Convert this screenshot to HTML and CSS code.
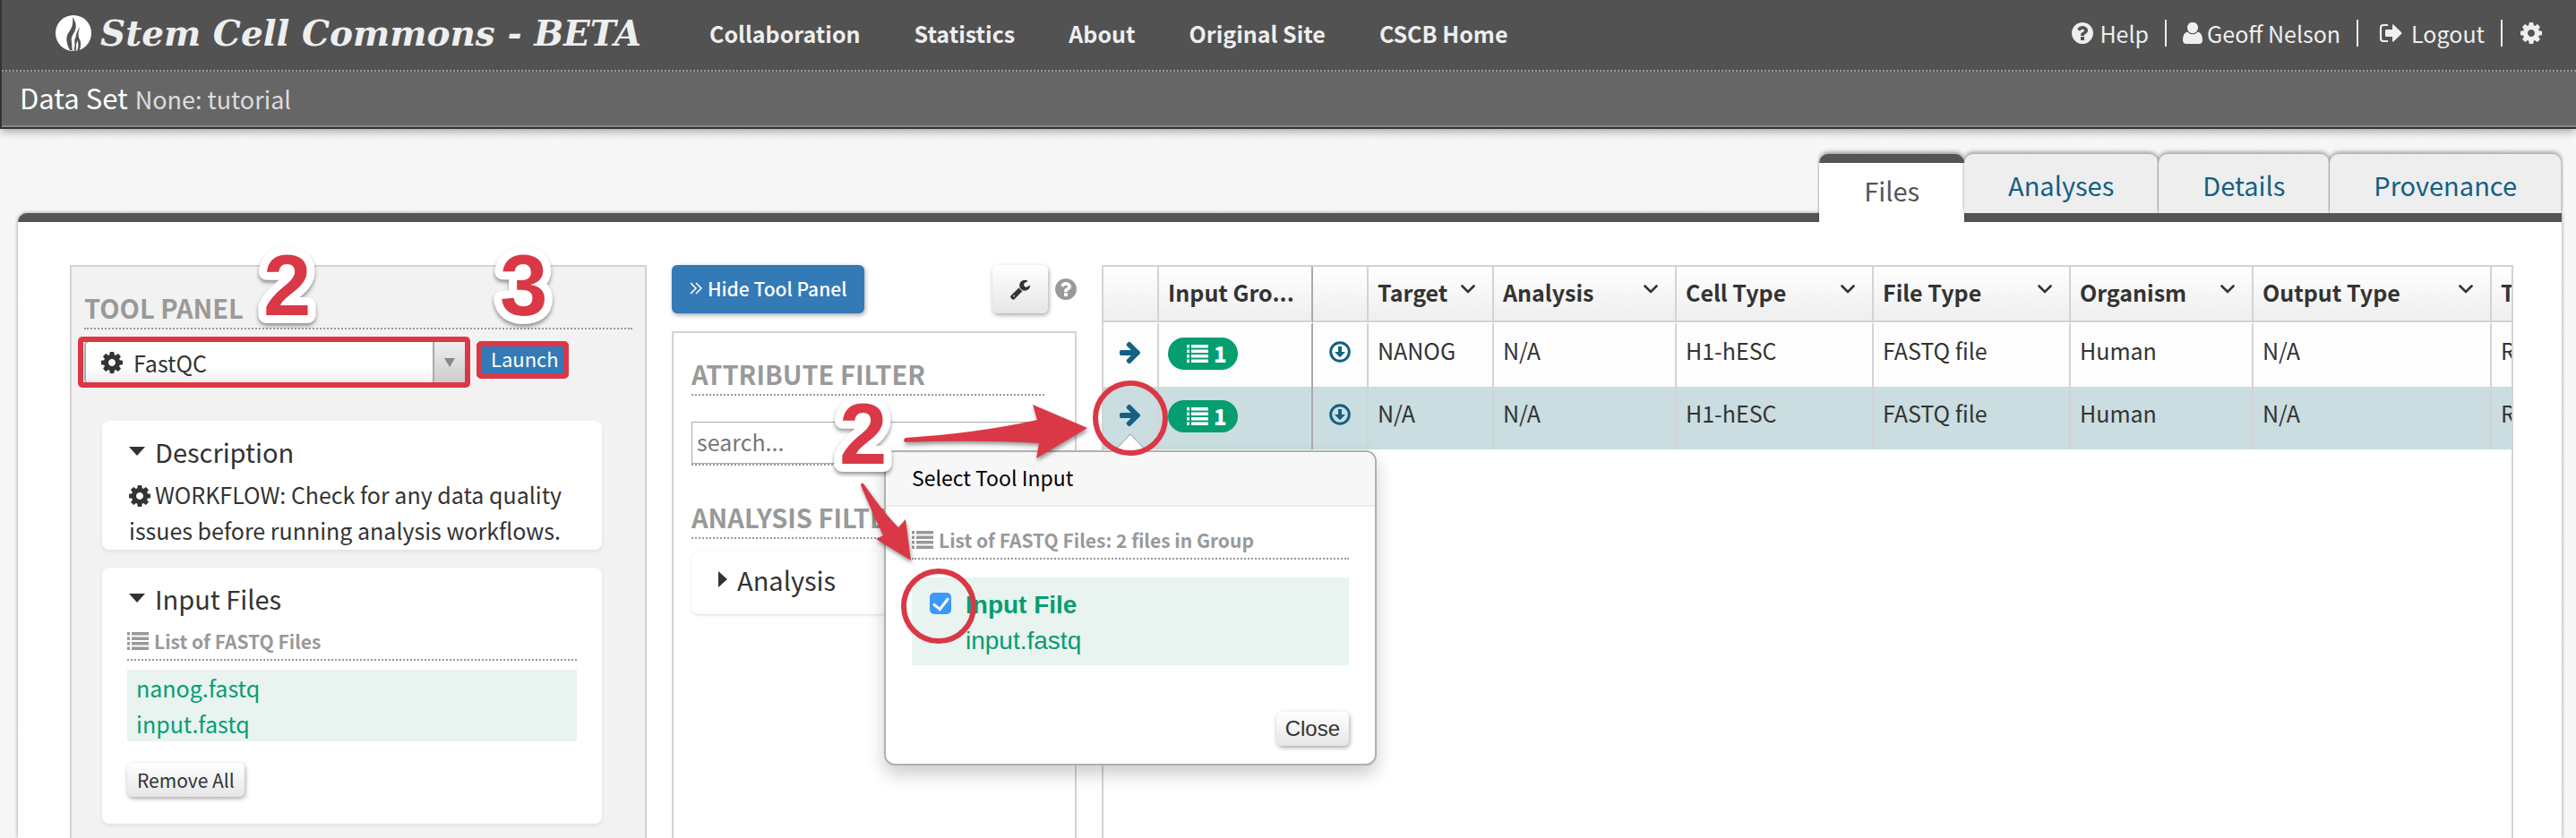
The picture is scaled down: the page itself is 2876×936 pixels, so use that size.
FILE: index.html
```html
<!DOCTYPE html>
<html lang="en">
<head>
<meta charset="utf-8">
<title>Stem Cell Commons - BETA</title>
<link rel="stylesheet" href="styles.css">
</head>
<body>
<svg class="defs" aria-hidden="true">
  <symbol id="i-help" viewBox="0 0 1792 1792"><path d="M1024 1376v-192q0-14-9-23t-23-9h-192q-14 0-23 9t-9 23v192q0 14 9 23t23 9h192q14 0 23-9t9-23zm256-672q0-88-55.500-163t-138.500-116-170-41q-243 0-371 213-15 24 8 42l132 100q7 6 19 6 16 0 25-12 53-68 86-92 34-24 86-24 48 0 85.500 26t37.500 59q0 38-20 61t-68 45q-63 28-115.500 86.500t-52.500 125.500v36q0 14 9 23t23 9h192q14 0 23-9t9-23q0-19 21.500-49.500t54.500-49.500q32-18 49-28.500t46-35 44.500-48 28-60.500 12.500-81zm384 192q0 209-103 385.500t-279.500 279.500-385.500 103-385.500-103-279.500-279.500-103-385.500 103-385.500 279.500-279.500 385.500-103 385.500 103 279.500 279.500 103 385.500z"/></symbol>
  <symbol id="i-cog" viewBox="0 0 1792 1792"><path d="M1152 896q0-106-75-181t-181-75-181 75-75 181 75 181 181 75 181-75 75-181zm512-109v222q0 12-8 23t-20 13l-185 28q-19 54-39 91 35 50 107 138 10 12 10 25t-9 23q-27 37-99 108t-94 71q-12 0-26-9l-138-108q-44 23-91 38-16 136-29 186-7 28-36 28h-222q-14 0-24.500-8.500t-11.500-21.500l-28-184q-49-16-90-37l-141 107q-10 9-25 9-14 0-25-11-126-114-165-168-7-10-7-23 0-12 8-23 15-21 51-66.500t54-70.500q-27-50-41-99l-183-27q-13-2-21-12.500t-8-23.500v-222q0-12 8-23t19-13l186-28q14-46 39-92-40-57-107-138-10-12-10-24 0-10 9-23 26-36 98.500-107.500t94.500-71.500q13 0 26 10l138 107q44-23 91-38 16-136 29-186 7-28 36-28h222q14 0 24.500 8.500t11.500 21.500l28 184q49 16 90 37l142-107q9-9 24-9 13 0 25 10 129 119 165 170 7 8 7 22 0 12-8 23-15 21-51 66.500t-54 70.500q26 50 41 98l183 28q13 2 21 12.500t8 23.500z"/></symbol>
  <symbol id="i-wrench" viewBox="0 0 1792 1792"><path d="M448 1472q0-26-19-45t-45-19-45 19-19 45 19 45 45 19 45-19 19-45zm644-420l-682 682q-37 37-90 37-52 0-91-37l-106-108q-38-36-38-90 0-53 38-91l681-681q39 98 114.500 173.500t173.500 114.500zm634-435q0 39-23 106-47 134-164.500 217.500t-258.500 83.500q-185 0-316.500-131.500t-131.500-316.500 131.500-316.500 316.500-131.500q58 0 121.500 16.500t107.500 46.500q16 11 16 28t-16 28l-293 169v224l193 107q5-3 79-48.500t135.500-81 70.500-35.500q15 0 23.500 10t8.500 25z"/></symbol>
  <symbol id="i-right" viewBox="0 0 1792 1792"><path d="M1600 960q0 54-37 91l-651 651q-39 37-91 37-51 0-90-37l-75-75q-38-38-38-91t38-91l293-293h-704q-52 0-84.500-37.500t-32.500-90.500v-128q0-53 32.500-90.500t84.500-37.500h704l-293-294q-38-36-38-90t38-90l75-75q38-38 90-38 53 0 91 38l651 651q37 35 37 90z"/></symbol>
  <symbol id="i-user" viewBox="0 0 22 24"><ellipse cx="11" cy="6" rx="6" ry="6.200"/><path d="M5 10.500q-5 1.500-5 9Q0 24 4 24h14q4 0 4-4.500 0-7.500-5-9-2.500 2.700-6 2.700t-6-2.700z"/></symbol>
  <symbol id="i-out" viewBox="0 0 26 22"><path d="M10 2H5Q2 2 2 5v12q0 3 3 3h5" fill="none" stroke="currentColor" stroke-width="2.200"/><path d="M8 7h7V2.500q0-2 1.500-.8L25 10q1 1 0 2l-8.500 8.300q-1.500 1.200-1.500-.8V15H8q-1 0-1-1V8q0-1 1-1z"/></symbol>
  <symbol id="i-list" viewBox="0 0 24 20"><path d="M0 0h3v3.500H0zM5 0h19v3.500H5zM0 5.500h3V9H0zM5 5.500h19V9H5zM0 11h3v3.500H0zM5 11h19v3.500H5zM0 16.500h3V20H0zM5 16.500h19V20H5z"/></symbol>
  <symbol id="i-down" viewBox="0 0 24 24"><circle cx="12" cy="12" r="10.300" fill="none" stroke="currentColor" stroke-width="3"/><path d="M10 6h4v6h4l-6 6.300L6 12h4z"/></symbol>
  <symbol id="i-chev" viewBox="0 0 16 10"><path d="M1.500 1.500 8 8l6.500-6.500" fill="none" stroke="currentColor" stroke-width="2.600" stroke-linecap="round"/></symbol>
</svg>
<svg class="paper" aria-hidden="true">
  <filter id="grain"><feTurbulence type="fractalNoise" baseFrequency="0.25" numOctaves="2"/><feColorMatrix values="0 0 0 0 0.9  0 0 0 0 0.9  0 0 0 0 0.9  0.700 0 0 0 -0.200"/></filter>
  <rect width="100%" height="100%" filter="url(#grain)"/>
</svg>

<header class="site">
  <div class="topbar">
    <a class="brand" href="#">
      <svg class="flame" viewBox="0 0 40 40"><ellipse cx="20" cy="20" rx="20" ry="20" fill="#fff"/><path d="M19 2q6 8 2.500 16-5 7-3.500 12 1 5 3 9.500l-5-.5Q9 26 15.500 18q5-7 3.500-16zM27.500 13q-3 6-1.500 12 4 7 .500 14.500l-5 .5q-3-8 1-15.500 1-7 5-11.500z" fill="#525252"/><path d="M19 39q-2-7 1.500-14 2 6 0 14.500zM24 39.500q2.500-6 .500-11.500-2.200 5-1.700 11.500z" fill="#fff"/></svg>
      <span>Stem Cell Commons - BETA</span>
    </a>
    <nav class="nav">
      <a href="#">Collaboration</a><a href="#">Statistics</a><a href="#">About</a><a href="#">Original Site</a><a href="#">CSCB Home</a>
    </nav>
    <nav class="account">
      <a href="#"><svg class="icon"><use href="#i-help"/></svg>Help</a>
      <a href="#"><svg class="icon-user"><use href="#i-user"/></svg>Geoff Nelson</a>
      <a class="logout" href="#"><svg class="icon-out"><use href="#i-out"/></svg>Logout</a>
      <a href="#" aria-label="Settings"><svg class="icon"><use href="#i-cog"/></svg></a>
    </nav>
  </div>
  <div class="titlebar"><h1>Data Set</h1><span>None: tutorial</span></div>
</header>

<nav class="tabs">
  <a class="active" href="#">Files</a><a href="#">Analyses</a><a href="#">Details</a><a href="#">Provenance</a>
</nav>

<main class="sheet">
  <section class="tool-panel">
    <h2>TOOL PANEL</h2>
    <div class="tool-row">
      <label class="picker">
        <svg class="icon"><use href="#i-cog"/></svg>
        <select aria-label="Tool"><option>FastQC</option></select>
        <span class="drop"></span>
      </label>
      <button class="launch" type="button">Launch</button>
    </div>
    <div class="card description">
      <h3><span class="tri-down"></span>Description</h3>
      <p><svg class="icon"><use href="#i-cog"/></svg>WORKFLOW: Check for any data quality issues before running analysis workflows.</p>
    </div>
    <div class="card inputs">
      <h3><span class="tri-down"></span>Input Files</h3>
      <h4><svg class="icon-list"><use href="#i-list"/></svg>List of FASTQ Files</h4>
      <ul class="files"><li>nanog.fastq</li><li>input.fastq</li></ul>
      <button class="btn small" type="button">Remove All</button>
    </div>
  </section>

  <section class="filter-col">
    <div class="filter-actions">
      <button class="btn hide" type="button"><svg class="icon-angles" viewBox="0 0 14 14"><path d="M1 1l6 6-6 6M7 1l6 6-6 6"/></svg>Hide Tool Panel</button>
      <button class="btn tools" type="button" aria-label="Options"><svg class="icon-wrench"><use href="#i-wrench"/></svg></button>
      <svg class="icon help"><use href="#i-help"/></svg>
    </div>
    <div class="filters">
      <h2>ATTRIBUTE FILTER</h2>
      <div class="search"><input type="text" placeholder="search..." aria-label="Search attributes"></div>
      <h2>ANALYSIS FILTER</h2>
      <div class="facet"><span class="tri-right"></span>Analysis</div>
    </div>
  </section>

  <section class="grid">
    <table>
      <colgroup><col class="c62"><col class="c172"><col class="c62"><col class="c140"><col class="c204"><col class="c220"><col class="c220"><col class="c204"><col class="c266"><col class="c220"></colgroup>
      <thead><tr>
        <th></th><th class="pin">Input Gro...</th><th></th>
        <th><div>Target<svg class="chev"><use href="#i-chev"/></svg></div></th>
        <th><div>Analysis<svg class="chev"><use href="#i-chev"/></svg></div></th>
        <th><div>Cell Type<svg class="chev"><use href="#i-chev"/></svg></div></th>
        <th><div>File Type<svg class="chev"><use href="#i-chev"/></svg></div></th>
        <th><div>Organism<svg class="chev"><use href="#i-chev"/></svg></div></th>
        <th><div>Output Type<svg class="chev"><use href="#i-chev"/></svg></div></th>
        <th>T</th>
      </tr></thead>
      <tbody>
        <tr><td class="act"><svg class="icon"><use href="#i-right"/></svg></td><td class="pin"><span class="badge"><svg class="icon-list"><use href="#i-list"/></svg>1</span></td><td class="act"><svg class="icon-down"><use href="#i-down"/></svg></td><td>NANOG</td><td>N/A</td><td>H1-hESC</td><td>FASTQ file</td><td>Human</td><td>N/A</td><td>R</td></tr>
        <tr class="on"><td class="act"><svg class="icon"><use href="#i-right"/></svg></td><td class="pin"><span class="badge"><svg class="icon-list"><use href="#i-list"/></svg>1</span></td><td class="act"><svg class="icon-down"><use href="#i-down"/></svg></td><td>N/A</td><td>N/A</td><td>H1-hESC</td><td>FASTQ file</td><td>Human</td><td>N/A</td><td>R</td></tr>
      </tbody>
    </table>
  </section>

  <div class="popover" role="dialog" aria-label="Select Tool Input">
    <svg class="pointer" viewBox="0 0 36 20"><path d="M0 20 18 1l18 19z" fill="#fff"/><path d="M0 20 18 1l18 19" fill="none" stroke="#999"/></svg>
    <h3>Select Tool Input</h3>
    <div class="pop-body">
      <h4><svg class="icon-list"><use href="#i-list"/></svg>List of FASTQ Files: 2 files in Group</h4>
      <label class="choice"><input type="checkbox" checked><span><b>Input File</b><br>input.fastq</span></label>
      <button class="btn close" type="button">Close</button>
    </div>
  </div>
</main>

<svg class="notes" width="1320" height="740">
  <g class="mark">
    <rect x="90" y="379" width="432" height="51" rx="2"/>
    <rect x="535" y="384" width="97" height="36" rx="2"/>
    <circle cx="1262" cy="467" r="39"/>
    <circle cx="1048" cy="677" r="39"/>
  </g>
  <g class="arrow">
    <path d="M1011 489Q1090 484 1158 469L1153 452 1214 478 1157 512 1160 495Q1090 491 1011 494q-4-2 0-5z"/>
    <path d="M964 540Q986 572 1003 589L1011 580 1017 626 978 602 986 598Q975 575 961 542q0-3 3-2z"/>
  </g>
  <g class="num">
    <text x="294" y="352">2</text><text x="558" y="352">3</text><text x="937" y="518">2</text>
  </g>
</svg>
</body>
</html>
```
FILE: styles.css
```css
* { box-sizing: border-box; }
html { background: #f7f7f7; }
body {
  margin: 0; min-height: 100vh; display: flex; flex-direction: column; position: relative;
  font: 25px/40px "Noto Sans CJK SC", "Noto Sans", sans-serif; color: #333; overflow-x: hidden;
}
button, input, select { font: inherit; color: inherit; }
a { text-decoration: none; color: inherit; }
h1, h2, h3, h4, p, ul { margin: 0; padding: 0; }
svg { display: block; flex: none; fill: currentColor; }
.defs { position: absolute; width: 0; height: 0; }
.paper { position: absolute; inset: 0; width: 100%; height: 100%; z-index: -1; }
.icon { width: 28px; height: 28px; }
.icon-list { width: 24px; height: 20px; }
.icon-down { width: 24px; height: 24px; }

.site { border: solid #333; border-width: 0 0 2px 2px; box-shadow: 0 2px 10px rgba(0,0,0,.4); color: #eee; }
.topbar { height: 80px; padding: 0 36px 4px 60px; display: flex; align-items: center; background: #525252; border-bottom: 2px dotted #999; }
.brand { display: flex; align-items: center; gap: 10px; width: 730px; font: italic bold 39px/44px "DejaVu Serif", serif; white-space: nowrap; }
.flame { width: 40px; height: 40px; }
.nav { display: flex; gap: 60px; font-weight: 700; }
.account { display: flex; margin-left: auto; }
.account a { display: flex; align-items: center; gap: 5px; }
.account a + a::before { content: ""; width: 2px; height: 30px; background: #eee; margin: 0 13px 0 18px; }
.icon-user { width: 22px; height: 24px; }
.icon-out { width: 26px; height: 22px; }
.account .logout { gap: 10px; }
.titlebar { height: 62px; padding: 0 20px 2px; display: flex; align-items: baseline; gap: 8px; line-height: 58px; background: #666; border-bottom: 2px solid #888; }
.titlebar h1 { font-size: 31px; font-weight: 400; color: #fff; }
.titlebar span { font-size: 27px; color: #ddd; }

.tabs { display: flex; justify-content: flex-end; margin: 28px 16px 0; font-size: 29px; line-height: 64px; z-index: 1; }
.tabs a { padding: 2px 49px 0; height: 66px; background: #eee; color: #136084; border-right: 1px solid #ccc; border-radius: 10px 10px 0 0; box-shadow: 0 -2px 5px rgba(0,0,0,.4); clip-path: inset(-10px -2px 0 -2px); }
.tabs a.active { height: 76px; margin-bottom: -10px; padding: 0 50px; line-height: 60px; background: #fff; color: #555; border-right: 0; border-top: 10px solid #555; }

.sheet { position: relative; flex: 1; display: flex; gap: 28px; margin: 0 16px 0 20px; padding: 48px 54px 0 58px; background: #fff; border-top: 10px solid #555; border-radius: 10px 0 0 0; box-shadow: 0 0 4px rgba(0,0,0,.4); }
h2 { padding-bottom: 4px; font-size: 29px; font-weight: 700; line-height: 38px; color: #999; border-bottom: 2px dotted #999; }
h4 { display: flex; align-items: center; gap: 6px; font-size: 21px; font-weight: 700; line-height: 40px; color: #999; border-bottom: 2px dotted #999; }

.tool-panel { flex: none; width: 644px; padding: 26px 14px 0; background: #f2f2f2; border: 2px solid #d3d3d3; border-bottom: 0; }
.tool-row { display: flex; gap: 17px; margin-top: 12px; align-items: flex-start; }
.picker { display: flex; align-items: center; width: 427px; height: 50px; padding-left: 15px; background: linear-gradient(#fff 60%, #eee); border: 2px solid #aaa; border-radius: 6px; }
.picker select { flex: 1; min-width: 0; margin-left: 8px; padding: 0 2px 2px; border: 0; background: none; appearance: none; height: 40px; }
.drop { width: 36px; height: 46px; border-left: 2px solid #aaa; background: linear-gradient(#eee, #ccc); display: flex; align-items: center; justify-content: center; }
.drop::before { content: ""; border: solid transparent; border-width: 10px 6px 0; border-top-color: #888; }
.launch { margin-top: 6px; height: 32px; padding: 0 10px 4px; border: 0; background: #337ab7; color: #fff; font-size: 22px; line-height: 28px; }
.card { margin: 0 34px 0 20px; padding: 14px 28px 0; background: #fff; border-radius: 8px; box-shadow: 0 2px 4px rgba(0,0,0,.08); }
.card h3 { display: flex; align-items: center; gap: 11px; font-size: 29px; font-weight: 400; line-height: 40px; padding-left: 2px; }
.tri-down { border: solid transparent; border-width: 10px 9px 0; border-top-color: #333; }
.tri-right { border: solid transparent; border-width: 9px 0 9px 10px; border-left-color: #333; }
.description { margin-top: 40px; height: 144px; }
.description p { padding: 8px 0 0 2px; }
.description .icon { display: inline-block; vertical-align: -5px; margin: 0 3px 0 -2px; }
.inputs { margin-top: 20px; height: 286px; }
.inputs h4 { margin-top: 8px; }
.files { list-style: none; margin-top: 10px; padding: 0 10px; background: #e9f3f0; color: #049e70; }
.btn { display: flex; align-items: center; justify-content: center; border: 0; border-radius: 6px; background: linear-gradient(#fff, #e6e6e6); box-shadow: 1px 2px 5px rgba(0,0,0,.35); }
.small { margin-top: 24px; height: 38px; padding: 0 11px; font-size: 21px; line-height: 34px; }

.filter-col { flex: none; width: 452px; display: flex; flex-direction: column; gap: 20px; }
.filter-actions { display: flex; align-items: center; height: 54px; }
.hide { height: 54px; padding: 0 20px 2px; gap: 6px; background: #337ab7; color: #fff; font-size: 21px; font-weight: 500; }
.icon-angles { width: 14px; height: 14px; fill: none; stroke: #fff; stroke-width: 1.5; }
.tools { width: 62px; height: 54px; margin-left: auto; }
.icon-wrench { width: 24px; height: 24px; }
.help { color: #999; margin: 0 -2px 0 6px; }
.filters { flex: 1; padding: 26px 34px 0 20px; border: 2px solid #d3d3d3; border-bottom: 0; }
.search { margin: 29px 0 38px; border-bottom: 2px dotted #999; }
.search input { display: block; width: 100%; height: 47px; padding: 0 5px 3px; border: 1px solid #aaa; }
.search input::placeholder { color: #777; }
.facet { display: flex; align-items: center; gap: 11px; margin-top: 14px; height: 70px; padding: 0 0 8px 30px; font-size: 29px; border-radius: 8px; box-shadow: 0 1px 3px rgba(0,0,0,.15); }

.grid { flex: 1; min-width: 0; overflow: hidden; border: 2px solid #d3d3d3; border-bottom: 0; }
table { table-layout: fixed; width: 1770px; border-collapse: separate; border-spacing: 0; }
.c62 { width: 62px; } .c172 { width: 172px; } .c140 { width: 140px; } .c204 { width: 204px; } .c220 { width: 220px; } .c266 { width: 266px; }
th, td { padding: 0 10px; text-align: left; white-space: nowrap; border-right: 2px solid #d3d3d3; }
th { height: 62px; padding-bottom: 4px; line-height: 54px; font-weight: 700; background: linear-gradient(#fff, #eee); border-bottom: 2px solid #d3d3d3; }
th div { display: flex; align-items: center; justify-content: space-between; }
.chev { width: 16px; height: 10px; margin: 0 9px 6px 0; }
td { height: 70px; padding-bottom: 12px; background: #fdfdfd; }
.on td { background: #cadde0; }
tbody tr:first-child td { height: 72px; border-top: 2px solid #fff; }
.pin { border-right-color: #aaa; }
.act { color: #136084; padding: 0 16px 8px; }
.act .icon-down { margin-left: 2px; }
.badge { display: flex; align-items: center; gap: 6px; width: 78px; height: 36px; margin-top: 8px; padding-left: 21px; border-radius: 18px; background: #049e70; color: #fff; font-size: 24px; font-weight: 900; line-height: 32px; }

.popover { position: absolute; left: 967px; top: 255px; width: 550px; height: 352px; background: #fff; border: 2px solid #b0b0b0; border-radius: 12px; box-shadow: 0 10px 20px rgba(0,0,0,.2); }
.pointer { position: absolute; left: 255px; top: -21px; width: 36px; height: 20px; }
.popover h3 { height: 61px; padding-left: 29px; font-size: 23px; font-weight: 400; line-height: 56px; color: #000; background: #f7f7f7; border-bottom: 2px solid #ebebeb; border-radius: 10px 10px 0 0; }
.pop-body { padding: 17px 29px; }
.choice { display: flex; gap: 16px; margin-top: 20px; padding: 11px 20px 7px; background: #e9f3f0; color: #049e70; font: 28px/40px "Liberation Sans", sans-serif; }
.choice input { appearance: none; display: flex; align-items: center; justify-content: center; width: 24px; height: 24px; margin: 6px 0 0; border-radius: 5px; background: #3b99fc; }
.choice input:checked::before { content: ""; width: 8px; height: 14px; margin-bottom: 3px; border: solid #fff; border-width: 0 3px 3px 0; rotate: 38deg; }
.close { margin: 52px 0 0 auto; height: 38px; padding: 0 10px; font: 24px/34px "Liberation Sans", sans-serif; }

.notes { position: absolute; left: 0; top: 0; z-index: 2; pointer-events: none; }
.mark { fill: none; stroke: #da3846; stroke-width: 6; }
.arrow { fill: #da3846; filter: drop-shadow(1px 3px 2px rgba(0,0,0,.4)); }
.num { font: bold 96px "Liberation Sans", sans-serif; fill: #da3846; stroke: #fff; stroke-width: 18; stroke-linejoin: round; paint-order: stroke; filter: drop-shadow(0 3px 2px rgba(0,0,0,.4)); }
```
